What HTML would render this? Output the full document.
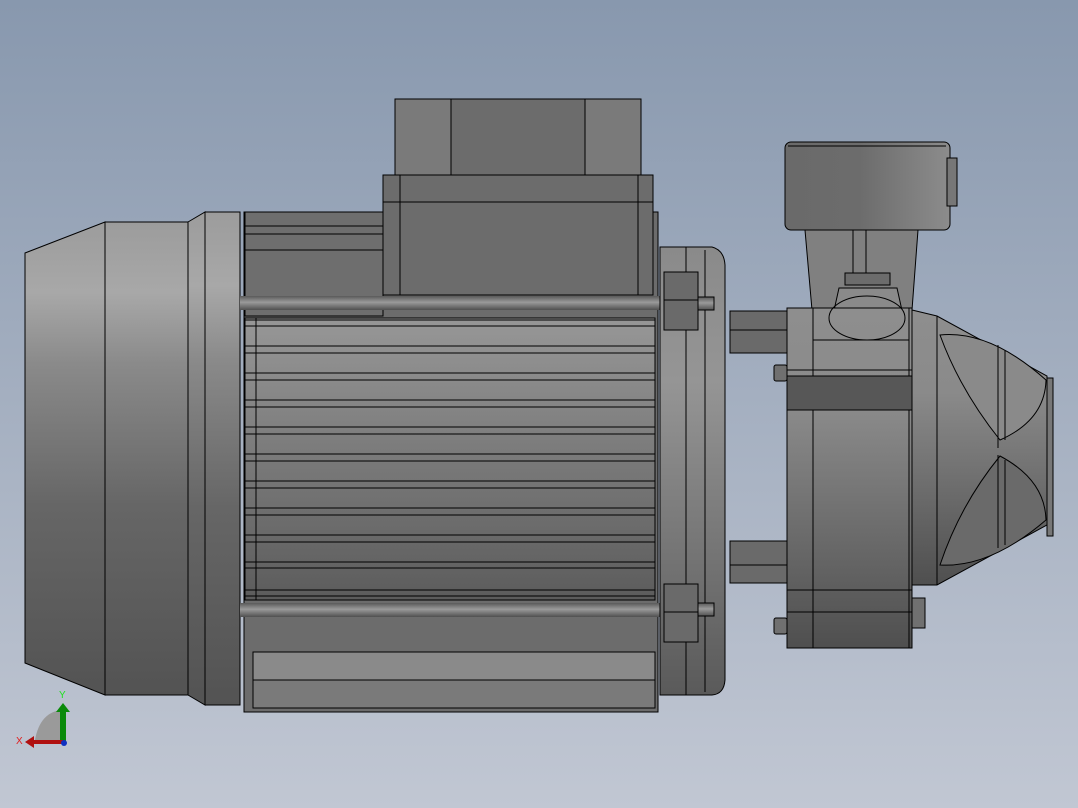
<!DOCTYPE html>
<html><head><style>html,body{margin:0;padding:0;overflow:hidden}svg{display:block}</style></head><body>
<svg width="1078" height="808" viewBox="0 0 1078 808" xmlns="http://www.w3.org/2000/svg" stroke="#000" stroke-width="1">
<defs>
<linearGradient id="bg" x1="0" y1="0" x2="0" y2="1"><stop offset="0" stop-color="#8898ae"/><stop offset="1" stop-color="#c1c7d3"/></linearGradient>
<linearGradient id="cyl" x1="0" y1="0" x2="0" y2="1"><stop offset="0" stop-color="#9c9c9c"/><stop offset="0.15" stop-color="#a8a8a8"/><stop offset="0.3" stop-color="#8a8a8a"/><stop offset="0.6" stop-color="#666"/><stop offset="1" stop-color="#535353"/></linearGradient>
<linearGradient id="body" x1="0" y1="0" x2="0" y2="1"><stop offset="0" stop-color="#8a8a8a"/><stop offset="0.3" stop-color="#959595"/><stop offset="1" stop-color="#5a5a5a"/></linearGradient>
<linearGradient id="fins" x1="0" y1="0" x2="0" y2="1"><stop offset="0" stop-color="#979797"/><stop offset="1" stop-color="#5c5c5c"/></linearGradient>
<linearGradient id="rod" x1="0" y1="0" x2="0" y2="1"><stop offset="0" stop-color="#5a5a5a"/><stop offset="0.45" stop-color="#9a9a9a"/><stop offset="1" stop-color="#505050"/></linearGradient>
<linearGradient id="cup" x1="0" y1="0" x2="1" y2="0"><stop offset="0" stop-color="#6a6a6a"/><stop offset="0.45" stop-color="#6c6c6c"/><stop offset="1" stop-color="#8c8c8c"/></linearGradient>
<linearGradient id="pump" x1="0" y1="0" x2="0" y2="1"><stop offset="0" stop-color="#8e8e8e"/><stop offset="0.3" stop-color="#8a8a8a"/><stop offset="1" stop-color="#4f4f4f"/></linearGradient>
</defs>
<rect width="1078" height="808" fill="url(#bg)" stroke="none"/>
<polygon points="25,253 105,222 105,695 25,663" fill="url(#cyl)"/>
<rect x="105" y="222" width="83" height="473" fill="url(#cyl)"/>
<polygon points="188,222 205,212 205,705 188,695" fill="url(#cyl)"/>
<rect x="205" y="212" width="35" height="493" fill="url(#cyl)"/>
<rect x="244" y="212" width="414" height="500" fill="#6c6c6c"/>
<rect x="245" y="318" width="410" height="282" fill="url(#fins)"/>
<rect x="245" y="212" width="138" height="104" fill="#6e6e6e"/>
<line x1="245" y1="226" x2="383" y2="226"/><line x1="245" y1="234" x2="383" y2="234"/><line x1="245" y1="250" x2="383" y2="250"/>
<g fill="none">
<line x1="245" y1="320" x2="655" y2="320"/><line x1="245" y1="326" x2="655" y2="326"/>
<line x1="245" y1="346" x2="655" y2="346"/><line x1="245" y1="353" x2="655" y2="353"/>
<line x1="245" y1="373" x2="655" y2="373"/><line x1="245" y1="380" x2="655" y2="380"/>
<line x1="245" y1="400" x2="655" y2="400"/><line x1="245" y1="407" x2="655" y2="407"/>
<line x1="245" y1="427" x2="655" y2="427"/><line x1="245" y1="434" x2="655" y2="434"/>
<line x1="245" y1="454" x2="655" y2="454"/><line x1="245" y1="461" x2="655" y2="461"/>
<line x1="245" y1="481" x2="655" y2="481"/><line x1="245" y1="488" x2="655" y2="488"/>
<line x1="245" y1="508" x2="655" y2="508"/><line x1="245" y1="515" x2="655" y2="515"/>
<line x1="245" y1="535" x2="655" y2="535"/><line x1="245" y1="542" x2="655" y2="542"/>
<line x1="245" y1="562" x2="655" y2="562"/><line x1="245" y1="568" x2="655" y2="568"/>
<line x1="245" y1="590" x2="655" y2="590"/><line x1="245" y1="596" x2="655" y2="596"/>
<line x1="256" y1="318" x2="256" y2="600"/>
</g>
<rect x="253" y="652" width="402" height="56" fill="#7a7a7a"/>
<rect x="253" y="652" width="402" height="28" fill="#8a8a8a"/>
<rect x="383" y="175" width="270" height="120" fill="#6c6c6c"/>
<line x1="383" y1="202" x2="653" y2="202"/><line x1="400" y1="175" x2="400" y2="295"/><line x1="638" y1="175" x2="638" y2="295"/>
<rect x="395" y="99" width="246" height="76" fill="#6c6c6c"/>
<rect x="395" y="99" width="56" height="76" fill="#7a7a7a"/>
<rect x="585" y="99" width="56" height="76" fill="#7a7a7a"/>
<rect x="240" y="296" width="476" height="14" fill="url(#rod)" stroke="none"/>
<rect x="240" y="603" width="476" height="14" fill="url(#rod)" stroke="none"/>
<path d="M660,247 H712 Q724,250 725,265 V680 Q724,694 712,695 H660 Z" fill="url(#body)"/>
<line x1="686" y1="247" x2="686" y2="695"/><line x1="705" y1="250" x2="705" y2="692"/>
<rect x="664" y="272" width="34" height="58" fill="#6a6a6a"/><line x1="664" y1="300" x2="698" y2="300"/>
<rect x="664" y="584" width="34" height="58" fill="#6a6a6a"/><line x1="664" y1="612" x2="698" y2="612"/>
<rect x="698" y="297" width="16" height="13" fill="url(#rod)"/><rect x="698" y="603" width="16" height="13" fill="url(#rod)"/>
<rect x="730" y="311" width="58" height="42" fill="#6a6a6a"/><line x1="730" y1="330" x2="788" y2="330"/>
<rect x="730" y="541" width="58" height="42" fill="#6a6a6a"/><line x1="730" y1="565" x2="788" y2="565"/>
<polygon points="805,230 918,230 912,310 812,310" fill="#808080"/>
<line x1="853" y1="230" x2="853" y2="280"/><line x1="866" y1="230" x2="866" y2="280"/>
<rect x="845" y="273" width="45" height="12" fill="#6c6c6c"/>
<path d="M839,288 H897 L903,315 H833 Z" fill="#8a8a8a"/>
<rect x="785" y="142" width="165" height="88" rx="6" fill="url(#cup)"/>
<line x1="788" y1="146" x2="946" y2="146"/>
<rect x="947" y="158" width="10" height="48" fill="#777"/>
<rect x="787" y="308" width="125" height="340" fill="url(#pump)"/>
<rect x="813" y="308" width="96" height="340" fill="url(#pump)"/>
<ellipse cx="867" cy="318" rx="38" ry="22" fill="none"/>
<line x1="813" y1="340" x2="909" y2="340"/><line x1="787" y1="370" x2="912" y2="370"/>
<rect x="787" y="376" width="125" height="34" fill="#575757"/>
<line x1="787" y1="590" x2="912" y2="590"/><line x1="787" y1="612" x2="912" y2="612"/>
<rect x="912" y="353" width="13" height="30" fill="#707070"/><rect x="912" y="598" width="13" height="30" fill="#707070"/>
<rect x="774" y="365" width="13" height="16" fill="#707070" rx="2"/><rect x="774" y="618" width="13" height="16" fill="#707070" rx="2"/>
<polygon points="912,310 937,316 1047,376 1047,525 937,585 912,585" fill="url(#pump)"/>
<line x1="937" y1="316" x2="937" y2="585"/>
<path d="M940,335 Q990,330 1046,380 Q1045,420 1000,440 Q960,390 940,335 Z" fill="#8a8a8a"/>
<path d="M940,565 Q990,568 1046,520 Q1045,480 1000,456 Q960,505 940,565 Z" fill="#6a6a6a"/>
<line x1="998" y1="345" x2="998" y2="448"/><line x1="1005" y1="350" x2="1005" y2="440"/>
<line x1="998" y1="455" x2="998" y2="548"/><line x1="1005" y1="460" x2="1005" y2="545"/>
<rect x="1047" y="378" width="6" height="158" fill="#777"/>
<path d="M35,740 Q40,712 62,710 V740 Z" fill="#9a9a9a" stroke="none"/>
<rect x="60" y="710" width="6" height="32" fill="#0a8a0a" stroke="none"/>
<polygon points="56,712 63,703 70,712" fill="#0a8a0a" stroke="none"/>
<rect x="32" y="740" width="32" height="4" fill="#b01010" stroke="none"/>
<polygon points="34,736 25,742 34,748" fill="#b01010" stroke="none"/>
<circle cx="64" cy="743" r="3" fill="#1030c0" stroke="none"/>
<text x="59" y="698" font-family="Liberation Sans, sans-serif" font-size="10" fill="#20e020" stroke="none">Y</text>
<text x="16" y="744" font-family="Liberation Sans, sans-serif" font-size="10" fill="#e02020" stroke="none">X</text>
</svg>
</body></html>
